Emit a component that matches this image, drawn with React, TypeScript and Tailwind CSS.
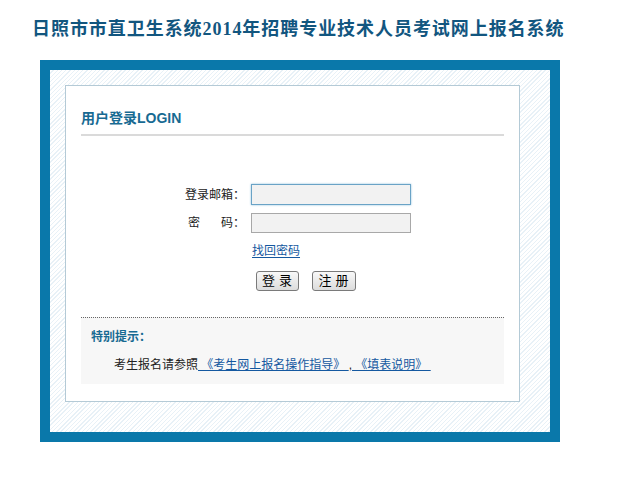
const CJK = "font-['Liberation_Sans','Noto_Sans_CJK_SC',sans-serif]";

function FormRow({ label, children }: { label: React.ReactNode; children: React.ReactNode }) {
  return (
    <div className="flex items-center">
      <div className="w-[170px] text-right text-[12px] text-[#222] pr-[6px]">{label}</div>
      {children}
    </div>
  );
}

export default function App() {
  return (
    <div className={`w-[619px] h-[495px] bg-white ${CJK}`}>
      {/* Title */}
      <h1 className="pt-[17px] pl-[32px] text-[18px] leading-[24px] font-bold text-[#12567f] font-['Liberation_Serif','Noto_Sans_CJK_SC',serif] tracking-[0.95px]">
        日照市市直卫生系统2014年招聘专业技术人员考试网上报名系统
      </h1>

      {/* Outer frame */}
      <div className="mt-[19px] ml-[40px] w-[520px] h-[382px] border-[10px] border-[#0a78aa] bg-[repeating-linear-gradient(135deg,#ffffff_0px,#ffffff_2px,#e8f1f7_2px,#e8f1f7_3px)] pt-[15px] pl-[15px]">
        <div className="w-[455px] h-[317px] bg-white border border-[#b4cad6] px-[15px]">
          {/* Heading */}
          <div className="pt-[20px] pb-[4px] border-b-2 border-[#dadada]">
            <span className="text-[14px] leading-[18px] font-bold text-[#176a92]">用户登录LOGIN</span>
          </div>

          {/* Form */}
          <div className="pt-[48px] flex flex-col">
            <FormRow label="登录邮箱：">
              <div className="w-[160px] h-[21px] bg-[#f2f2f2] border border-[#6aa3c6] shadow-[0_0_2px_#8fc0dd]" />
            </FormRow>
            <div className="mt-[8px]">
              <FormRow label={<span className="inline-flex justify-between w-[57px]"><span>密</span><span>码：</span></span>}>
                <div className="w-[160px] h-[20px] bg-[#f2f2f2] border border-[#a8a8a8]" />
              </FormRow>
            </div>
            <div className="mt-[10px] pl-[171px] text-[12px] leading-[16px]">
              <a className="text-[#1458a0] underline underline-offset-2" href="#">找回密码</a>
            </div>
            <div className="mt-[12px] pl-[175px] flex gap-[13px]">
              <button className="w-[43px] h-[20px] rounded-[3px] border border-[#7a7a7a] bg-[linear-gradient(#f8f8f8,#dcdcdc)] text-[13px] leading-[18px] text-black tracking-[4px] pl-[3px]">
                登录
              </button>
              <button className="w-[44px] h-[20px] rounded-[3px] border border-[#7a7a7a] bg-[linear-gradient(#f8f8f8,#dcdcdc)] text-[13px] leading-[18px] text-black tracking-[4px] pl-[3px]">
                注册
              </button>
            </div>
          </div>

          {/* Notice */}
          <div className="mt-[26px] border-t border-dotted border-[#666] bg-[#f7f7f7] h-[67px] pl-[10px] pt-[11px]">
            <div className="text-[12px] leading-[16px] font-bold text-[#176a92]">特别提示：</div>
            <div className="mt-[12px] pl-[23px] text-[12px] leading-[16px] text-[#222] whitespace-pre flex items-end">
              <span>考生报名请参照</span>
              <a className="text-[#1458a0] underline" href="#"> 《考生网上报名操作指导》 </a>
              <span>,</span>
              <a className="text-[#1458a0] underline" href="#"> 《填表说明》 </a>
            </div>
          </div>
        </div>
      </div>
    </div>
  );
}
